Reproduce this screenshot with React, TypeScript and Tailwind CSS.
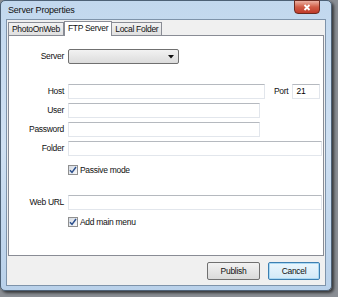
import React from "react";

const font = { fontFamily: '"Liberation Sans", Arial, sans-serif' };

function TextBox({ w, value }: { w: string; value?: string }) {
  return (
    <div
      className={`${w} h-[15px] border border-[#e2e6ec] border-t-[#b5b9bf] bg-white px-[3px] text-[8.5px] leading-[13px] text-black`}
    >
      {value}
    </div>
  );
}

function Check({ label }: { label: string }) {
  return (
    <div className="flex items-center gap-[2px] h-[12px]">
      <div className="w-[10px] h-[10px] border border-[#8f8f8f] bg-gradient-to-br from-[#d6dbe2] to-[#f7f8fa] flex items-center justify-center">
        <svg width="8" height="8" viewBox="0 0 8 8">
          <path d="M1 4.2 L3 6.4 L7 1" stroke="#2b4f8c" strokeWidth="1.5" fill="none" />
        </svg>
      </div>
      <span className="text-[8.5px] tracking-[-0.3px] text-[#111]">{label}</span>
    </div>
  );
}

function Label({ children }: { children: React.ReactNode }) {
  return (
    <span className="text-[8.5px] tracking-[-0.3px] text-[#111] text-right pr-[4px]">{children}</span>
  );
}

export default function App() {
  return (
    <div className="w-[338px] h-[297px] bg-[#8a8e94] overflow-hidden" style={font}>
      <div className="w-[332px] h-[291px] rounded-[5px] border border-[#4d6176] bg-gradient-to-b from-[#c2d8ee] via-[#cfe0f2] to-[#b9d1ea] shadow-[2px_2px_3px_rgba(0,0,0,0.6)] flex flex-col">
        {/* title bar */}
        <div className="h-[18px] flex items-start justify-between pl-[7px] pr-[11px]">
          <span className="text-[9px] tracking-[-0.2px] leading-[18px] text-[#111]">Server Properties</span>
          <div className="w-[26px] h-[14px] -mt-[1px] rounded-b-[4px] border border-[#6b2a20] bg-gradient-to-b from-[#eab0a2] via-[#d05c46] to-[#c03a2a] flex items-center justify-center">
            <svg width="8" height="7" viewBox="0 0 8 7">
              <path d="M1.5 1 L6.5 6 M6.5 1 L1.5 6" stroke="#fff" strokeWidth="1.8" />
            </svg>
          </div>
        </div>

        {/* client */}
        <div className="mx-[5px] h-[267px] border border-[#7e93aa] bg-[#f0f0f0] flex flex-col">
          <div className="px-[1px]">
            {/* tabs */}
            <div className="flex items-end h-[15px]">
              <div className="h-[13px] px-[3px] border border-[#898c95] border-b-0 bg-gradient-to-b from-[#f2f2f2] to-[#e0e0e0] text-[8.5px] tracking-[-0.3px] leading-[13px] text-[#111]">
                PhotoOnWeb
              </div>
              <div className="h-[15px] px-[3px] border border-[#898c95] border-b-0 bg-white text-[8.5px] tracking-[-0.3px] leading-[12px] text-[#111] relative z-10 -mb-[1px]">
                FTP Server
              </div>
              <div className="h-[13px] px-[3px] border border-[#898c95] border-b-0 border-l-0 bg-gradient-to-b from-[#f2f2f2] to-[#e0e0e0] text-[8.5px] tracking-[-0.3px] leading-[13px] text-[#111]">
                Local Folder
              </div>
            </div>
            {/* panel */}
            <div className="h-[221px] border border-[#898c95] bg-white pt-[13px]">
              <div className="grid grid-cols-[59px_1fr] items-center">
                <Label>Server</Label>
                <div className="w-[111px] h-[15px] rounded-[2px] border border-[#707070] bg-gradient-to-b from-[#f2f2f2] to-[#dcdcdc] flex items-center justify-end pr-[4px]">
                  <svg width="6" height="4" viewBox="0 0 6 4">
                    <path d="M0 0 H6 L3 3.5 Z" fill="#111" />
                  </svg>
                </div>
              </div>

              <div className="grid grid-cols-[59px_1fr] items-center gap-y-[4px] mt-[20px]">
                <Label>Host</Label>
                <div className="flex items-center">
                  <TextBox w="w-[197px]" />
                  <span className="text-[8.5px] tracking-[-0.3px] text-[#111] ml-[9px] mr-[4px]">Port</span>
                  <TextBox w="w-[28px]" value="21" />
                </div>
                <Label>User</Label>
                <TextBox w="w-[192px]" />
                <Label>Password</Label>
                <TextBox w="w-[192px]" />
                <Label>Folder</Label>
                <TextBox w="w-[254px]" />
              </div>
              <div className="ml-[59px] mt-[8px]">
                <Check label="Passive mode" />
              </div>

              <div className="grid grid-cols-[59px_1fr] items-center mt-[19px]">
                <Label>Web URL</Label>
                <TextBox w="w-[254px]" />
              </div>
              <div className="ml-[59px] mt-[6px]">
                <Check label="Add main menu" />
              </div>
            </div>
          </div>

          {/* buttons */}
          <div className="flex-1 flex items-center justify-end gap-[8px] pr-[5px] pt-[1px]">
            <button className="w-[53px] h-[18px] rounded-[2px] border border-[#707070] bg-gradient-to-b from-[#f2f2f2] to-[#dadada] text-[8.5px] tracking-[-0.3px] text-[#111]">
              Publish
            </button>
            <button className="w-[52px] h-[18px] rounded-[2px] border border-[#3c7fb1] bg-gradient-to-b from-[#eaf6fd] to-[#d2e9f7] shadow-[inset_0_0_0_1px_#a9d8f3] text-[8.5px] tracking-[-0.3px] text-[#111]">
              Cancel
            </button>
          </div>
        </div>
      </div>
    </div>
  );
}
